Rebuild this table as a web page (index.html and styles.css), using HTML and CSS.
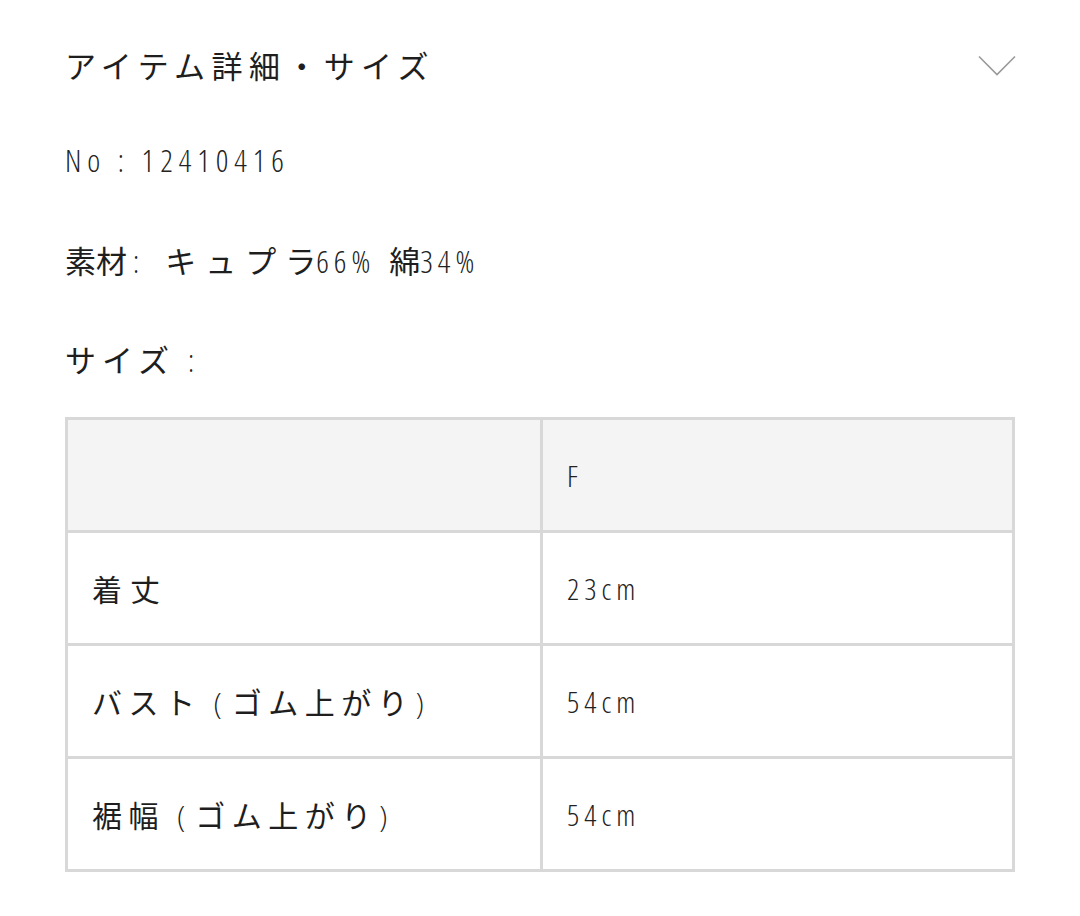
FILE: index.html
```html
<!DOCTYPE html>
<html lang="ja">
<head>
<meta charset="utf-8">
<link rel="stylesheet" href="styles.css">
</head>
<body>
<div class="wrap">
  <div class="head">
    <h2 class="title">アイテム詳細・サイズ</h2>
    <svg class="chev" width="38" height="22" viewBox="0 0 38 22"><polyline points="1,1.5 19,19.5 37,1.5" fill="none" stroke="#9a9a9a" stroke-width="1.6"/></svg>
  </div>
  <p class="no lat">No : 12410416</p>
  <p class="mat"><span class="kj">素材</span><span class="lat colon">:</span><span class="kn">キュプ</span><span class="kj">ラ</span><span class="lat pct">66%</span><span class="kj k2">綿</span><span class="lat pct">34%</span></p>
  <p class="size"><span class="kn">サイズ</span><span class="lat colon2">:</span></p>
  <table class="tbl">
    <tr class="hd"><td class="c1"></td><td class="c2 lat">F</td></tr>
    <tr><td class="c1"><span class="kj2">着丈</span></td><td class="c2 lat">23cm</td></tr>
    <tr><td class="c1"><span class="kn2">バスト</span><span class="lat paren">(</span><span class="kn2">ゴム上が</span><span class="kj">り</span><span class="lat cparen">)</span></td><td class="c2 lat">54cm</td></tr>
    <tr><td class="c1"><span class="kn2">裾幅</span><span class="lat paren">(</span><span class="kn2">ゴム上が</span><span class="kj">り</span><span class="lat cparen">)</span></td><td class="c2 lat">54cm</td></tr>
  </table>
</div>
</body>
</html>
```
FILE: styles.css
```css
html, body { margin: 0; padding: 0; background: #fff; }
body {
  font-family: "Noto Sans CJK JP", sans-serif;
  color: #1e1e1e;
}
.wrap { padding: 0 65px 0 65px; width: 950px; }
.head {
  margin-top: 35px;
  height: 60px;
  display: flex;
  align-items: center;
  justify-content: space-between;
}
.title {
  margin: 0;
  font-size: 31px;
  font-weight: 400;
  letter-spacing: 6.4px;
  line-height: 60px;
}
.chev { margin-right: -1px; margin-top: 2px; }
.lat {
  font-family: "Open Sans", sans-serif;
  font-stretch: 75%;
  font-weight: 300;
  color: #222;
}
.no {
  margin: 45px 0 0;
  font-size: 31px;
  line-height: 40px;
  letter-spacing: 5.9px;
}
.mat {
  margin: 60px 0 0;
  font-size: 31px;
  line-height: 40px;
}
.kj { letter-spacing: 0px; }
.kn { letter-spacing: 9px; }
.pct { letter-spacing: 5px; font-size: 31px; }
.k2 { margin-left: 14px; }
.colon { margin-left: 6px; margin-right: 26px; }
.size {
  margin: 58px 0 0;
  font-size: 31px;
  line-height: 40px;
}
.size .kn { letter-spacing: 6px; }
.colon2 { margin-left: 13px; }
.tbl {
  margin-top: 37px;
  width: 950px;
  border-collapse: collapse;
  border: 3px solid #d8d8d8;
}
.tbl td {
  border: 3px solid #d8d8d8;
  height: 110px;
  padding: 0 0 0 24px;
  vertical-align: middle;
}
.tbl .c1 {
  width: 448px;
  font-size: 30px;
  letter-spacing: 4px;
}
.tbl .c1 .kj { letter-spacing: 0; }
.tbl .c2 {
  font-size: 30px;
  letter-spacing: 5px;
}
.hd td { background: #f4f4f4; }
.kj2 { letter-spacing: 8px; }
.kn2 { letter-spacing: 6.5px; }
.paren { letter-spacing: 10px; margin-left: 12px; }
.cparen { letter-spacing: 0; margin-left: 8px; }
```
